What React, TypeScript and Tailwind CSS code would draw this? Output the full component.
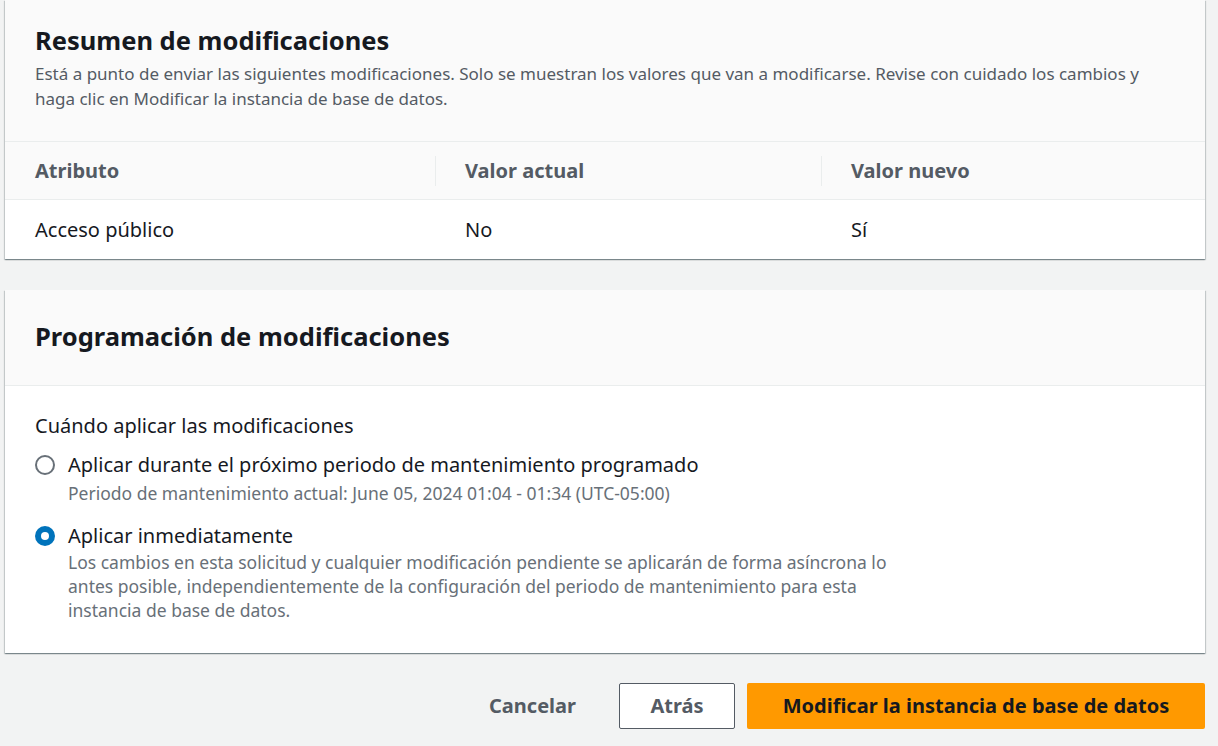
const shadow =
  "shadow-[0_1px_1px_0_rgba(0,28,36,0.3),1px_1px_1px_0_rgba(0,28,36,0.15),-1px_1px_1px_0_rgba(0,28,36,0.15)]";

function Radio({ checked }: { checked?: boolean }) {
  return checked ? (
    <span className="mt-[4px] flex h-5 w-5 shrink-0 items-center justify-center rounded-full bg-[#0073bb]">
      <span className="h-2 w-2 rounded-full bg-white" />
    </span>
  ) : (
    <span className="mt-[4px] h-5 w-5 shrink-0 rounded-full border-2 border-[#687078] bg-white" />
  );
}

export default function App() {
  return (
    <div className="min-h-[746px] bg-[#f2f3f3] pl-[5px] pr-[13px] font-['Noto_Sans',sans-serif] text-[#16191f]">
      {/* Resumen */}
      <div className={`bg-white ${shadow}`}>
        <div className="bg-[#fafafa] px-[30px] pt-[24px] pb-[30px]">
          <h2 className="text-[25.5px] leading-[32px] font-bold">Resumen de modificaciones</h2>
          <p className="mt-[5px] text-[17px] leading-[25px] text-[#545b64]">
            Está a punto de enviar las siguientes modificaciones. Solo se muestran los valores que van a modificarse.
            Revise con cuidado los cambios y haga clic en Modificar la instancia de base de datos.
          </p>
        </div>
        <div className="grid grid-cols-[430px_386px_1fr] border-t border-[#eaeded] bg-[#fafafa] text-[20px] font-bold text-[#545b64]">
          <div className="flex h-[57px] items-center px-[30px]">Atributo</div>
          <div className="flex h-[57px] items-center px-[30px]">
            <span className="-ml-[30px] mr-[29px] h-[30px] w-px bg-[#eaeded]" />
            Valor actual
          </div>
          <div className="flex h-[57px] items-center px-[30px]">
            <span className="-ml-[30px] mr-[29px] h-[30px] w-px bg-[#eaeded]" />
            Valor nuevo
          </div>
        </div>
        <div className="grid grid-cols-[430px_386px_1fr] border-t border-[#eaeded] text-[20px]">
          <div className="flex h-[59px] items-center px-[30px]">Acceso público</div>
          <div className="flex h-[59px] items-center px-[30px]">No</div>
          <div className="flex h-[59px] items-center px-[30px]">Sí</div>
        </div>
      </div>

      {/* Programación */}
      <div className={`mt-[31px] bg-white ${shadow}`}>
        <div className="flex h-[96px] items-center border-b border-[#eaeded] bg-[#fafafa] px-[30px]">
          <h2 className="mt-[-4px] text-[25.5px] leading-[32px] font-bold">Programación de modificaciones</h2>
        </div>
        <div className="px-[30px] pt-[26px] pb-[31px]">
          <div className="text-[20px] leading-[28px]">Cuándo aplicar las modificaciones</div>
          <div className="mt-[11px] flex gap-[13px]">
            <Radio />
            <div>
              <div className="text-[20px] leading-[28px]">Aplicar durante el próximo periodo de mantenimiento programado</div>
              <div className="mt-[2px] text-[17.5px] leading-[24px] text-[#687078]">
                Periodo de mantenimiento actual: June 05, 2024 01:04 - 01:34 (UTC-05:00)
              </div>
            </div>
          </div>
          <div className="mt-[17px] flex gap-[13px]">
            <Radio checked />
            <div>
              <div className="text-[20px] leading-[28px]">Aplicar inmediatamente</div>
              <div className="w-[825px] text-[17.5px] leading-[24px] text-[#687078]">
                Los cambios en esta solicitud y cualquier modificación pendiente se aplicarán de forma asíncrona lo antes
                posible, independientemente de la configuración del periodo de mantenimiento para esta instancia de base
                de datos.
              </div>
            </div>
          </div>
        </div>
      </div>

      {/* Acciones */}
      <div className="mt-[30px] flex items-center justify-end text-[20px] font-bold">
        <button className="h-[46px] px-[20px] mr-[23px] text-[#545b64]">Cancelar</button>
        <button className="h-[46px] w-[116px] rounded-[2px] border border-[#545b64] bg-white text-[#545b64]">
          Atrás
        </button>
        <button className="ml-[12px] h-[46px] w-[458px] rounded-[2px] bg-[#ff9900] text-[#16191f]">
          Modificar la instancia de base de datos
        </button>
      </div>
    </div>
  );
}
